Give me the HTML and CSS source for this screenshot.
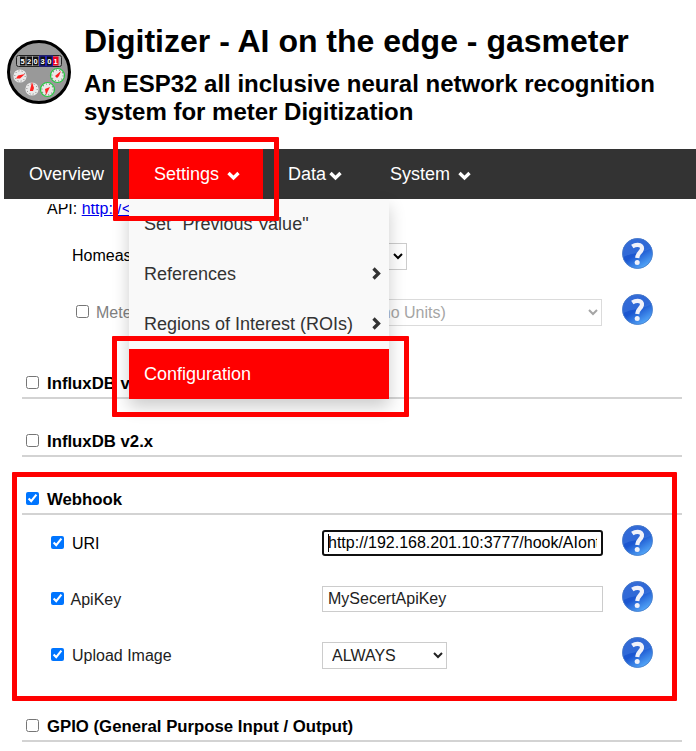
FILE: index.html
```html
<!DOCTYPE html>
<html lang="en">
<head>
<meta charset="utf-8">
<title>Digitizer - AI on the edge - gasmeter</title>
<link rel="stylesheet" href="styles.css">
</head>
<body>
<svg class="defs" aria-hidden="true">
  <defs>
    <linearGradient id="blue" x1="0.2" y1="0" x2="0.8" y2="1"><stop offset="0" stop-color="#2259cf"/><stop offset=".5" stop-color="#1b56d0"/><stop offset="1" stop-color="#5db5ff"/></linearGradient>
    <symbol id="help" viewBox="0 0 31 31">
      <circle cx="15.5" cy="15.5" r="15.2" fill="url(#blue)"/>
      <path d="M1.5 19A14.5 14.5 0 0 1 29.2 10.500Q23 14 15 15Q7 16 1.500 19Z" fill="#4a80df" opacity=".45"/>
      <circle cx="15.500" cy="15.500" r="15" fill="none" stroke="#4d7fc9" stroke-width=".8"/>
      <path d="M10.300 8.600Q13 6.800 15.800 6.900C19 7 20.300 8.900 19.900 11.200C19.300 14.400 15.600 14.600 15.200 20" fill="none" stroke="#f1f2fa" stroke-width="4.200"/>
      <circle cx="15.200" cy="24.500" r="2.500" fill="#f1f2fa"/>
    </symbol>
    <symbol id="down" viewBox="0 0 13 10"><path d="M1.500 2L6.500 7L11.500 2" fill="none" stroke="currentColor" stroke-width="3.300"/></symbol>
    <symbol id="right" viewBox="0 0 9 13"><path d="M1.500 1.500L6.500 6.500L1.500 11.500" fill="none" stroke="currentColor" stroke-width="3.300"/></symbol>
    <symbol id="dial" viewBox="-7 -7 14 14"><circle r="6.600" fill="#e9e9e9"/><circle r="5.200" fill="none" stroke="#666" stroke-width="1" stroke-dasharray=".8 2.400"/></symbol>
  </defs>
</svg>

<header class="header">
  <svg class="logo" viewBox="0 0 64 64">
    <circle cx="32" cy="32" r="30.500" fill="#999" stroke="#000" stroke-width="3"/>
    <rect x="9.500" y="15.500" width="45" height="11" rx="2" fill="#aaa" stroke="#222"/>
    <path d="M13 16.500h5.500v9h-5.500zM19.500 16.500h5.500v9h-5.500zM26 16.500h5.500v9h-5.500z" fill="#111"/>
    <path d="M32 15.500h7v11h-7zM39 15.500h7v11h-7z" fill="#2020b0"/>
    <path d="M33.300 16.500h4.700v9h-4.700zM40 16.500h4.700v9H40z" fill="#111"/>
    <path d="M46 16.500h5.500v9H46z" fill="#f00020"/>
    <g class="digits"><text x="15.700" y="24">5</text><text x="22.200" y="24">2</text><text x="28.700" y="24">0</text><text x="35.600" y="24">3</text><text x="42.300" y="24">0</text><text x="48.700" y="24">1</text></g>
    <use href="#dial" x="6" y="29" width="14" height="14"/>
    <use href="#dial" x="18" y="42" width="14" height="14"/>
    <use href="#dial" x="33" y="42" width="15" height="15"/>
    <use href="#dial" x="43" y="28" width="15" height="15"/>
    <g fill="none" stroke="#22c93e" stroke-width="1.200"><circle cx="40.500" cy="49.500" r="7"/><circle cx="50.500" cy="35.500" r="7"/></g>
    <path d="M9 38.500l2-3 7-1.500-5 4.500zM23 50l2-8 2 6-1 3-3 0zM39 55l-1-6 5-2-2 4zM48 36l6-5-2 5-2 2z" fill="#f22"/>
  </svg>
  <div class="heading">
    <h1>Digitizer - AI on the edge - gasmeter</h1>
    <h2>An ESP32 all inclusive neural network recognition system for meter Digitization</h2>
  </div>
</header>

<nav class="nav">
  <a class="item overview">Overview</a>
  <div class="item settings">Settings<svg class="down"><use href="#down"/></svg>
    <div class="menu">
      <a>Set "Previous Value"</a>
      <a>References<svg class="right"><use href="#right"/></svg></a>
      <a>Regions of Interest (ROIs)<svg class="right"><use href="#right"/></svg></a>
      <a class="active">Configuration</a>
    </div>
    <span class="mark mark-settings"></span>
    <span class="mark mark-config"></span>
  </div>
  <div class="item data">Data<svg class="down"><use href="#down"/></svg></div>
  <div class="item system">System<svg class="down"><use href="#down"/></svg></div>
</nav>

<main class="form">
  <p class="api">API: <a href="#">http://&lt;IP&gt;/json</a></p>
  <div class="row">
    <label class="plain">Homeassistant</label>
    <select class="short"><option></option></select>
    <svg class="help"><use href="#help"/></svg>
  </div>
  <div class="row disabled">
    <label class="sub"><input type="checkbox"><span>Meter Type</span></label>
    <select class="wide" disabled><option>Other (no Units)</option></select>
    <svg class="help"><use href="#help"/></svg>
  </div>
  <h4 class="gap"><input type="checkbox"><span>InfluxDB v1.x</span></h4>
  <h4><input type="checkbox"><span>InfluxDB v2.x</span></h4>
  <section class="webhook">
    <h4><input type="checkbox" checked><span>Webhook</span></h4>
    <div class="row">
      <label><input type="checkbox" checked><span>URI</span></label>
      <div class="field"><input class="text focused" type="text" value="http://192.168.201.10:3777/hook/AIontheedge"><i class="caret"></i></div>
      <svg class="help"><use href="#help"/></svg>
    </div>
    <div class="row soft">
      <label class="tight"><input type="checkbox" checked><span>ApiKey</span></label>
      <input class="text" type="text" value="MySecertApiKey">
      <svg class="help"><use href="#help"/></svg>
    </div>
    <div class="row soft">
      <label><input type="checkbox" checked><span>Upload Image</span></label>
      <select class="upload"><option>ALWAYS</option></select>
      <svg class="help"><use href="#help"/></svg>
    </div>
    <span class="mark mark-webhook"></span>
  </section>
  <h4 class="gap"><input type="checkbox"><span>GPIO (General Purpose Input / Output)</span></h4>
</main>
</body>
</html>
```
FILE: styles.css
```css
* { box-sizing: border-box; }
body {
  margin: 0;
  height: 751px;
  overflow: hidden;
  background: #fff;
  color: #000;
  font: 16px/18px Arial, "Liberation Sans", sans-serif;
}
.defs { display: block; width: 0; height: 0; }
.header { display: flex; height: 149px; padding-left: 7px; }
.logo { width: 64px; height: 64px; margin-top: 40px; flex: none; }
.digits { fill: #fff; font: bold 7.5px "Liberation Sans", sans-serif; text-anchor: middle; }
.heading { margin-left: 13px; padding-top: 22px; }
h1, h2, h4, p { margin: 0; }
h1 { font-size: 32px; line-height: 38px; }
h2 { width: 600px; margin-top: 10px; font-size: 24px; line-height: 28px; }

.nav { display: flex; height: 50px; margin-left: 4px; background: #333; color: #fff; font-size: 18px; line-height: 50px; }
.item { position: relative; padding-left: 25px; white-space: nowrap; }
.overview { width: 125px; }
.settings { width: 134px; background: #f00; z-index: 2; }
.data { width: 102px; }
.down { width: 13px; height: 10px; vertical-align: -1px; }
.settings .down { margin-left: 8px; }
.data .down { margin-left: 3px; }
.system .down { margin-left: 8px; }
.menu { position: absolute; left: 0; top: 50px; width: 260px; background: #f9f9f9; color: #333; box-shadow: 0 8px 16px rgba(0, 0, 0, .2); }
.menu a { display: flex; align-items: center; justify-content: space-between; height: 50px; padding: 0 8px 0 15px; }
.menu .active { background: #f00; color: #fff; }
.right { width: 9px; height: 13px; margin-top: -1px; }
.mark { position: absolute; border: 5px solid #f00; border-radius: 1px; pointer-events: none; }
.mark-settings { left: -16px; top: -12px; width: 166px; height: 84px; }
.mark-config { left: -17px; top: 187px; width: 297px; height: 81px; }
.mark-webhook { left: -10px; top: 15px; width: 665px; height: 229px; }

.form { width: 660px; height: 547px; margin: 5px 0 0 22px; }
.api { height: 24px; padding-left: 25px; overflow: hidden; line-height: 10px; }
.api a { color: #00e; }
.row { display: grid; grid-template-columns: 300px 300px 31px; height: 56px; align-items: start; }
.row label { display: flex; padding: 19px 0 0 29px; white-space: nowrap; }
.row label span { margin-top: 1px; }
.row label.plain { padding: 19px 0 0 50px; }
.row label.sub { padding-left: 54px; }
input[type="checkbox"] { flex: none; width: 13px; height: 13px; margin: 2px 8px 0 0; }
.tight input[type="checkbox"], .sub input[type="checkbox"] { margin-right: 7px; }
.tight span { margin-left: -.5px; }
.disabled label, .disabled select { color: #808080; }
.help { width: 31px; height: 31px; margin-top: 10px; }
select, .text { height: 27px; margin: 15px 0 0; border: 1px solid #ccc; border-radius: 0; background: #fff; color: #000; font: 16px "Liberation Sans", sans-serif; }
select { padding: 0 0 0 5px; }
.soft label, .soft select, .soft .text { color: #222; }
.short { width: 85px; }
.wide { width: 280px; }
.upload { width: 125px; }
.text { display: block; width: 281px; height: 26px; padding: 0 5px; outline: 0; }
.text.focused { padding: 0 4px; border: 2px solid #101010; border-radius: 3px; }
.field { position: relative; }
.caret { position: absolute; left: 6px; top: 19px; width: 1px; height: 18px; background: #000; }
h4 { display: flex; height: 58px; padding: 33px 0 0 4px; border-bottom: 2px solid #d3d3d3; font-size: 16.75px; line-height: 18px; }
h4 span { margin-top: 1px; }
.gap { margin-top: 1px; }
.webhook { position: relative; }
```
